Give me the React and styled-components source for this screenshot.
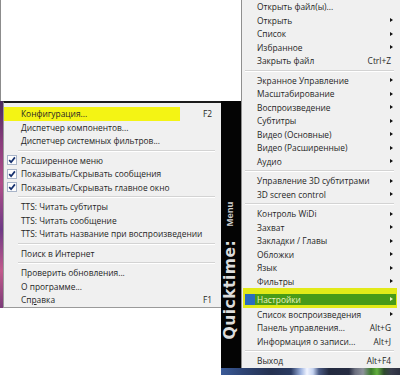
import React from 'react';
import styled, { createGlobalStyle } from 'styled-components';

const GlobalStyle = createGlobalStyle`
  html, body {
    margin: 0;
    padding: 0;
    background: #fff;
  }
  body {
    font-family: "Open Sans", "Noto Sans", sans-serif;
  }
`;

const Screen = styled.div`
  width: 400px;
  height: 375px;
  overflow: hidden;
  display: flex;
  background: #fff;
`;

// ---- left half: blank window + settings submenu ----

const LeftColumn = styled.div`
  width: 221px;
  flex-shrink: 0;
  display: flex;
  flex-direction: column;
`;

const BlankWindow = styled.div`
  height: 101px;
  flex-shrink: 0;
  box-sizing: border-box;
  border-left: 1px solid #8c8c8c;
  background: #fff;
`;

const SubmenuRow = styled.div`
  display: flex;
`;

const WallpaperEdge = styled.div`
  width: 3px;
  flex-shrink: 0;
  background: linear-gradient(to bottom, #4a2a5e 0%, #8a3c7c 20%, #b04e88 40%, #6e3a86 62%, #c25a8c 82%, #7a3a78 100%);
`;

const Submenu = styled.div`
  flex: 1;
  background: #f0f0f0;
  border-top: 2px solid #1c1c1c;
  border-left: 1px solid #9a9a9a;
  border-bottom: 1px solid #9a9a9a;
  padding: 4px 0 0 0;
  color: #262626;
  font-size: 8.4px;
`;

const MenuItem = styled.div`
  display: flex;
  align-items: center;
  height: 13.5px;
  padding-right: ${p => p.$trail || 9}px;
  white-space: nowrap;
  background: ${p => p.$marker
    ? 'linear-gradient(to right, #f4f414 0, #f4f414 176px, transparent 176px)'
    : 'transparent'};
`;

const Gutter = styled.span`
  width: 17px;
  flex-shrink: 0;
  display: flex;
  align-items: center;
  padding-left: 3px;
  box-sizing: border-box;
`;

const Label = styled.span`
  flex: 1;
`;

const Shortcut = styled.span`
  margin-left: 12px;
`;

const Accel = styled.span`
  text-decoration: underline;
`;

const Separator = styled.div`
  margin: 2px ${p => p.$right || 6}px 2px ${p => p.$left || 14}px;
  border-top: 1px solid #d3d3d3;
  border-bottom: 1px solid #fff;
`;

const CheckBox = () => (
  <svg width="10" height="10" viewBox="0 0 10 10">
    <rect x="0.5" y="0.5" width="9" height="9" fill="#fdfdfd" stroke="#a8b4c8" />
    <path d="M2.2 5.2 L4.1 7.2 L7.9 2.4" fill="none" stroke="#15306e" strokeWidth="1.7" />
  </svg>
);

// ---- right half: label strip + main menu ----

const RightArea = styled.div`
  flex: 1;
  display: flex;
  flex-direction: column;
`;

const RightContent = styled.div`
  height: 367.5px;
  flex-shrink: 0;
  display: flex;
`;

const StripColumn = styled.div`
  width: 20px;
  flex-shrink: 0;
  display: flex;
  flex-direction: column;
`;

const StripTop = styled.div`
  height: 101px;
  flex-shrink: 0;
  background: #fff;
`;

const Strip = styled.div`
  flex: 1;
  background: #040404;
  display: flex;
  flex-direction: column;
  justify-content: flex-end;
  align-items: center;
  padding-bottom: 28px;
`;

const StripText = styled.div`
  writing-mode: vertical-rl;
  transform: rotate(180deg);
  white-space: nowrap;
  font-family: "DejaVu Sans", sans-serif;
  font-weight: bold;
  color: #dcdcdc;
  font-size: 15.5px;
  letter-spacing: 0.5px;
  line-height: 1;
`;

const StripSmall = styled.span`
  font-family: "Liberation Sans", sans-serif;
  font-size: 9.5px;
  color: #cfcfcf;
  letter-spacing: 0;
  margin-inline-start: 13px;
`;

const MainMenu = styled.div`
  flex: 1;
  background: #f0f0f0;
  border-left: 1px solid #8f8f8f;
  color: #262626;
  font-size: 8.4px;
`;

const MainItem = styled(MenuItem)`
  padding-left: 15px;
`;

const Arrow = styled.span`
  width: 0;
  height: 0;
  border-top: 2.5px solid transparent;
  border-bottom: 2.5px solid transparent;
  border-left: 3px solid ${p => p.$color || '#111'};
  margin-left: 8px;
`;

const HotBand = styled.div`
  margin: 0 3px 0 1px;
  padding: 5.5px 1px 3px 2px;
  background: #e2ea18;
`;

const HotItem = styled.div`
  display: flex;
  align-items: center;
  height: 11px;
  padding: 0 3px 0 12px;
  color: #eef4c0;
  background: linear-gradient(to right, #2a6cbe 0, #2a6cbe 10px, #489a18 10px, #489a18 100%);
`;

const BottomWallpaper = styled.div`
  flex: 1;
  background: linear-gradient(to right,
    #3a5a98 0px, #2e4474 22px, #243150 50px, #2a3a62 70px, #9fb4e0 80px,
    #f2f5ff 86px, #c4d2f0 92px, #4a5a84 98px, #232a40 108px, #262c42 128px,
    #6a6e7e 134px, #8e929c 142px, #3a7a2a 150px, #62b03e 156px, #2e4a2c 163px,
    #3a3e4e 170px, #2c3040 179px);
`;

const subItems = [
  { label: 'Конфигурация...', shortcut: 'F2', marker: true },
  { label: 'Диспетчер компонентов...' },
  { label: 'Диспетчер системных фильтров...' },
  { sep: true },
  { label: 'Расширенное меню', checked: true },
  { label: 'Показывать/Скрывать сообщения', checked: true },
  { label: 'Показывать/Скрывать главное окно', checked: true },
  { sep: true },
  { label: 'TTS: Читать субтитры' },
  { label: 'TTS: Читать сообщение' },
  { label: 'TTS: Читать название при воспроизведении' },
  { sep: true },
  { label: 'Поиск в Интернет' },
  { sep: true },
  { label: 'Проверить обновления...' },
  { label: 'О программе...' },
  { label: <>Сп<Accel>р</Accel>авка</>, shortcut: 'F1' },
];

const mainItems = [
  { label: 'Открыть файл(ы)...' },
  { label: 'Открыть', sub: true },
  { label: 'Список', sub: true },
  { label: 'Избранное', sub: true },
  { label: 'Закрыть файл', shortcut: 'Ctrl+Z' },
  { sep: true },
  { label: 'Экранное Управление', sub: true },
  { label: 'Масштабирование', sub: true },
  { label: 'Воспроизведение', sub: true },
  { label: 'Субтитры', sub: true },
  { label: 'Видео (Основные)', sub: true },
  { label: 'Видео (Расширенные)', sub: true },
  { label: 'Аудио', sub: true },
  { sep: true },
  { label: 'Управление 3D субтитрами', sub: true },
  { label: '3D screen control', sub: true },
  { sep: true },
  { label: 'Контроль WiDi', sub: true },
  { label: 'Захват', sub: true },
  { label: 'Закладки / Главы', sub: true },
  { label: 'Обложки', sub: true },
  { label: 'Язык', sub: true },
  { label: 'Фильтры', sub: true },
  { label: 'Настройки', sub: true, hot: true },
  { label: 'Список воспроизведения', sub: true },
  { label: 'Панель управления...', shortcut: 'Alt+G' },
  { label: 'Информация о записи...', shortcut: 'Alt+J' },
  { sep: true },
  { label: 'Выход', shortcut: 'Alt+F4' },
];

const App = () => {
  return (
    <Screen>
      <GlobalStyle />
      <LeftColumn>
        <BlankWindow />
        <SubmenuRow>
          <WallpaperEdge />
          <Submenu>
            {subItems.map((it, i) =>
              it.sep ? (
                <Separator key={i} />
              ) : (
                <MenuItem key={i} $marker={it.marker}>
                  <Gutter>{it.checked && <CheckBox />}</Gutter>
                  <Label>{it.label}</Label>
                  {it.shortcut && <Shortcut>{it.shortcut}</Shortcut>}
                </MenuItem>
              )
            )}
          </Submenu>
        </SubmenuRow>
      </LeftColumn>

      <RightArea>
        <RightContent>
          <StripColumn>
            <StripTop />
            <Strip>
              <StripText>
                Quicktime:<StripSmall>Menu</StripSmall>
              </StripText>
            </Strip>
          </StripColumn>
          <MainMenu>
            {mainItems.map((it, i) => {
              if (it.sep) return <Separator key={i} $left={3} $right={0} />;
              if (it.hot) {
                return (
                  <HotBand key={i}>
                    <HotItem>
                      <Label>{it.label}</Label>
                      <Arrow $color="#eef4c0" />
                    </HotItem>
                  </HotBand>
                );
              }
              return (
                <MainItem key={i} $trail={it.shortcut ? 9 : 7}>
                  <Label>{it.label}</Label>
                  {it.shortcut && <Shortcut>{it.shortcut}</Shortcut>}
                  {it.sub && <Arrow />}
                </MainItem>
              );
            })}
          </MainMenu>
        </RightContent>
        <BottomWallpaper />
      </RightArea>
    </Screen>
  );
};

export default App;
